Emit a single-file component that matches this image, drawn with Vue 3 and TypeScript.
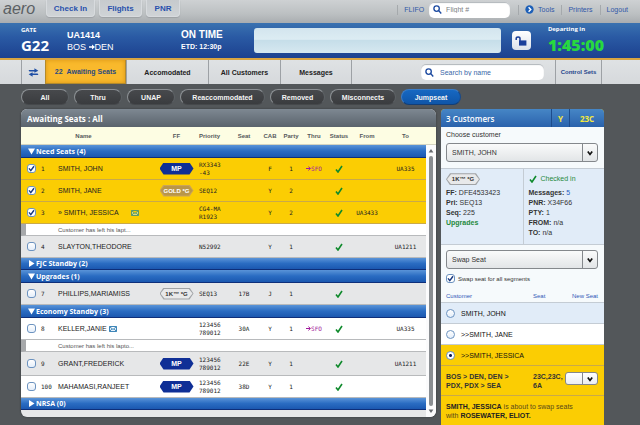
<script setup lang="ts">
import { ref } from 'vue'

interface Passenger {
  kind: 'pax'
  num: string
  name: string
  linked?: boolean
  mail?: boolean
  ff?: 'MP' | 'GOLD *G' | '1K™ *G'
  priority: string[]
  seat: string
  cab: string
  party: string
  thru?: string
  from?: string
  to?: string
  selected: boolean
  shade: 'white' | 'gray'
  tall?: boolean
}
interface Note { kind: 'note'; text: string }
interface Group { title: string; open: boolean; rows: (Passenger | Note)[] }

const groups = ref<Group[]>([
  {
    title: 'Need Seats (4)', open: true, rows: [
      { kind: 'pax', num: '1', name: 'SMITH, JOHN', ff: 'MP', priority: ['RX3343', '-43'], seat: '', cab: 'F', party: '1', thru: 'SFO', to: 'UA335', selected: true, shade: 'white' },
      { kind: 'pax', num: '2', name: 'SMITH, JANE', ff: 'GOLD *G', priority: ['SEQ12'], seat: '', cab: 'Y', party: '2', selected: true, shade: 'white' },
      { kind: 'pax', num: '3', name: 'SMITH, JESSICA', linked: true, mail: true, priority: ['CG4-MA', 'R1923'], seat: '', cab: 'Y', party: '2', from: 'UA3433', selected: true, shade: 'white' },
      { kind: 'note', text: 'Customer has left his lapt...' },
      { kind: 'pax', num: '4', name: 'SLAYTON,THEODORE', priority: ['N52992'], seat: '', cab: 'Y', party: '1', to: 'UA1211', selected: false, shade: 'gray' },
    ],
  },
  { title: 'FJC Standby (2)', open: false, rows: [] },
  {
    title: 'Upgrades (1)', open: true, rows: [
      { kind: 'pax', num: '7', name: 'PHILLIPS,MARIAMISS', ff: '1K™ *G', priority: ['SEQ13'], seat: '17B', cab: 'J', party: '1', selected: false, shade: 'gray' },
    ],
  },
  {
    title: 'Economy Standby (3)', open: true, rows: [
      { kind: 'pax', num: '8', name: 'KELLER,JANIE', mail: true, priority: ['123456', '789012'], seat: '30A', cab: 'Y', party: '1', thru: 'SFO', to: 'UA335', selected: false, shade: 'white' },
      { kind: 'note', text: 'Customer has left his lapto...' },
      { kind: 'pax', num: '9', name: 'GRANT,FREDERICK', ff: 'MP', priority: ['123456', '789012'], seat: '22E', cab: 'Y', party: '1', to: 'UA1211', selected: false, shade: 'gray', tall: true },
      { kind: 'pax', num: '100', name: 'MAHAMASI,RANJEET', ff: 'MP', priority: ['123456', '789012'], seat: '38D', cab: 'Y', party: '1', selected: false, shade: 'white' },
    ],
  },
  { title: 'NRSA (0)', open: false, rows: [] },
])

const filters = ['All', 'Thru', 'UNAP', 'Reaccommodated', 'Removed', 'Misconnects', 'Jumpseat']
const activeFilter = ref('Jumpseat')
const swapAll = ref(true)
const swapWith = ref('jessica')

const badgeClass = (ff: string) => (ff === 'MP' ? 'mp' : ff === 'GOLD *G' ? 'gold' : 'onek')
</script>

<template>
  <div class="page">
    <header class="topbar">
      <span class="logo">aero</span>
      <nav class="modes">
        <button class="mode mode-wide">Check In</button>
        <button class="mode mode-mid">Flights</button>
        <button class="mode mode-small">PNR</button>
      </nav>
      <nav class="links">
        <a href="#" class="flifo">FLIFO</a>
        <label class="search flight">
          <svg viewBox="0 0 10 10"><circle cx="4" cy="4" r="3" /><path d="M6.2 6.2 9.2 9.4" /></svg>
          <input type="text" placeholder="Flight #" aria-label="Flight number" />
        </label>
        <a href="#" class="tools">
          <svg viewBox="0 0 10 10"><circle cx="5" cy="5" r="4.6" /><path d="M4 2.6 6.4 5 4 7.4" /></svg>
          Tools
        </a>
        <a href="#" class="sep">Printers</a>
        <a href="#" class="sep">Logout</a>
      </nav>
    </header>

    <section class="flightbar">
      <div class="gate"><span class="gate-label">GATE</span><span class="gate-num">G22</span></div>
      <div class="flight-id">
        <strong>UA1414</strong>
        <span class="route">BOS
          <svg viewBox="0 0 6 6"><path d="M0 2.2H3V.6L6 3 3 5.4V3.8H0Z" /></svg>DEN</span>
      </div>
      <div class="status"><strong>ON TIME</strong><span>ETD: 12:30p</span></div>
      <div class="message"></div>
      <button class="lock" aria-label="Unlock">
        <svg viewBox="0 0 12 10"><path d="M4 4.4h7.4V9.6H4Z" /><path class="shackle" d="M1.2 4V2.4C1.2.4 5 .4 5 2.4V5" /></svg>
      </button>
      <div class="departing"><span>Departing in</span><strong>1:45:00</strong></div>
    </section>

    <nav class="tabs">
      <button class="tab swap" aria-label="Refresh">
        <svg viewBox="0 0 12 10"><path d="M1 2.2H7V.4L11.4 3 7 5.4V3.8H1.6L.6 3Z" /><path d="M11 7.8H5V9.6L.6 7 5 4.8V6.2h5.4L11.4 7Z" /></svg>
      </button>
      <button class="tab awaiting active"><span>22</span>Awaiting Seats</button>
      <button class="tab accom">Accomodated</button>
      <button class="tab all-tab">All Customers</button>
      <button class="tab msgs">Messages</button>
      <div class="find">
        <label class="search name">
          <svg viewBox="0 0 10 10"><circle cx="4" cy="4" r="3" /><path d="M6.2 6.2 9.2 9.4" /></svg>
          <input type="text" placeholder="Search by name" aria-label="Search by name" />
        </label>
      </div>
      <button class="tab sets">Control Sets</button>
    </nav>

    <div class="filters">
      <button v-for="f in filters" :key="f" class="pill" :class="['pill-' + f.toLowerCase(), { on: f === activeFilter }]" @click="activeFilter = f">{{ f }}</button>
    </div>

    <main class="content">
      <section class="list">
        <h1>Awaiting Seats : All</h1>
        <div class="list-body">
          <table>
            <colgroup>
              <col class="c-check" /><col class="c-num" /><col class="c-name" /><col class="c-ff" /><col class="c-pri" /><col class="c-seat" />
              <col class="c-cab" /><col class="c-party" /><col class="c-thru" /><col class="c-status" /><col class="c-from" /><col />
            </colgroup>
            <thead>
              <tr>
                <th></th><th></th><th class="h-name">Name</th><th>FF</th><th class="left">Priority</th><th>Seat</th>
                <th>CAB</th><th>Party</th><th>Thru</th><th>Status</th><th>From</th><th>To</th>
              </tr>
            </thead>
            <tbody v-for="g in groups" :key="g.title">
              <tr class="group" :class="{ closed: !g.open }">
                <td colspan="12">
                  <button @click="g.open = !g.open">
                    <svg viewBox="0 0 7 7"><path :d="g.open ? 'M0 .5H7L3.5 6.5Z' : 'M1 0 6.5 3.5 1 7Z'" /></svg>{{ g.title }}
                  </button>
                </td>
              </tr>
              <template v-if="g.open">
                <template v-for="(r, i) in g.rows" :key="i">
                  <tr v-if="r.kind === 'note'" class="note">
                    <td colspan="12"><span>{{ r.text }}</span></td>
                  </tr>
                  <tr v-else class="pax" :class="[r.selected ? 'picked' : r.shade, { tall: r.tall }]">
                    <td class="check"><input v-model="r.selected" type="checkbox" :aria-label="'Select ' + r.name" /></td>
                    <td class="num">{{ r.num }}</td>
                    <td class="who">
                      <span v-if="r.linked" class="linked">» </span>{{ r.name }}
                      <svg v-if="r.mail" class="mail" :class="{ far: r.linked }" viewBox="0 0 8 6"><path d="M.5.5h7v5h-7ZM.5.5 4 3.5 7.5.5M.5 5.5 3 2.8M7.5 5.5 5 2.8" /></svg>
                    </td>
                    <td class="ff"><span v-if="r.ff" class="badge" :class="badgeClass(r.ff)"><b>{{ r.ff }}</b></span></td>
                    <td class="left"><div v-for="p in r.priority" :key="p">{{ p }}</div></td>
                    <td>{{ r.seat }}</td>
                    <td>{{ r.cab }}</td>
                    <td>{{ r.party }}</td>
                    <td class="via">
                      <template v-if="r.thru"><svg viewBox="0 0 5 5"><path d="M0 2.5H4.2M2.4.6 4.4 2.5 2.4 4.4" /></svg>{{ r.thru }}</template>
                    </td>
                    <td><svg class="tick" viewBox="0 0 8 8"><path d="M1 4.4 3 7 7 1" /></svg></td>
                    <td>{{ r.from }}</td>
                    <td>{{ r.to }}</td>
                  </tr>
                </template>
              </template>
            </tbody>
          </table>
          <div class="scroll">
            <div class="scroll-cap"></div>
            <svg viewBox="0 0 6 5"><path d="M3 1 5.4 4.4H.6Z" /></svg>
            <div class="thumb"></div>
            <svg viewBox="0 0 6 5"><path d="M3 4 .6.6H5.4Z" /></svg>
          </div>
        </div>
      </section>

      <aside class="side">
        <header class="side-head">
          <h2>3 Customers</h2><span class="cabin">Y</span><span class="seatno">23C</span>
        </header>
        <div class="choose">
          <label for="customer">Choose customer</label>
          <div class="select">
            <select id="customer"><option>SMITH, JOHN</option><option>SMITH, JANE</option><option>SMITH, JESSICA</option></select>
            <span class="arrow"><svg viewBox="0 0 6 6"><path d="M.8 1.4 3 4.4 5.2 1.4" /></svg></span>
          </div>
        </div>
        <div class="details">
          <div>
            <p class="lead"><span class="badge onek"><b>1K™ *G</b></span></p>
            <p><b>FF:</b> DFE4533423</p>
            <p><b>Pri:</b> SEQ13</p>
            <p><b>Seq:</b> 225</p>
            <p><a href="#">Upgrades</a></p>
          </div>
          <div>
            <p class="lead ok"><svg class="tick" viewBox="0 0 8 8"><path d="M1 4.4 3 7 7 1" /></svg>Checked in</p>
            <p><b>Messages:</b> <i>5</i></p>
            <p><b>PNR:</b> X34F66</p>
            <p><b>PTY:</b> 1</p>
            <p><b>FROM:</b> n/a</p>
            <p><b>TO:</b> n/a</p>
          </div>
        </div>
        <div class="swapbox">
          <div class="select">
            <select aria-label="Action"><option>Swap Seat</option></select>
            <span class="arrow"><svg viewBox="0 0 6 6"><path d="M.8 1.4 3 4.4 5.2 1.4" /></svg></span>
          </div>
          <label class="segments"><input v-model="swapAll" type="checkbox" />Swap seat for all segments</label>
          <div class="swap-head"><span>Customer</span><span>Seat</span><span class="end">New Seat</span></div>
        </div>
        <label class="person blue"><input v-model="swapWith" type="radio" name="swap" value="john" />SMITH, JOHN</label>
        <label class="person"><input v-model="swapWith" type="radio" name="swap" value="jane" />&gt;&gt;SMITH, JANE</label>
        <label class="person gold-row"><input v-model="swapWith" type="radio" name="swap" value="jessica" />&gt;&gt;SMITH, JESSICA</label>
        <div class="legs">
          <span>BOS &gt; DEN, DEN &gt;<br />PDX, PDX &gt; SEA</span>
          <span>23C,23C,<br />6A</span>
          <div class="select mini">
            <select aria-label="New seat"><option></option></select>
            <span class="arrow"><svg viewBox="0 0 6 6"><path d="M.8 1.4 3 4.4 5.2 1.4" /></svg></span>
          </div>
        </div>
        <p class="summary"><b>SMITH, JESSICA</b> is about to swap seats<br />with <b>ROSEWATER, ELIOT.</b></p>
      </aside>
    </main>
  </div>
</template>

<style>
body {
  background: #53575a;
}
</style>

<style scoped>
* {
  box-sizing: border-box;
}
.page {
  display: flex;
  flex-direction: column;
  min-height: 100vh;
  font-family: "Liberation Sans", Arial, sans-serif;
  font-size: 7px;
  color: #222;
}
button, input, select {
  font: inherit;
  color: inherit;
  margin: 0;
  padding: 0;
  border: 0;
  background: none;
}
a {
  color: #3058a8;
  text-decoration: none;
}
p, h1, h2 {
  margin: 0;
}
svg {
  flex: none;
}

/* top bar */
.topbar {
  display: flex;
  height: 23px;
  padding: 0 12px 0 3px;
  background: linear-gradient(#ced1d3, #bcc0c2 60%, #a9adb0);
}
.logo {
  width: 43px;
  font-size: 16px;
  font-style: italic;
  line-height: 18px;
  color: #5b5f63;
}
.modes {
  display: flex;
  gap: 4px;
}
.mode {
  height: 17px;
  border: 1px solid #d8dbde;
  border-top: 0;
  border-radius: 0 0 4px 4px;
  background: linear-gradient(#c6cacd, #cfd3d6);
  font-size: 8px;
  font-weight: bold;
  color: #2850ac;
  box-shadow: 0 1px 1px #9da1a5;
}
.mode-wide { width: 49px; }
.mode-mid { width: 43px; }
.mode-small { width: 34px; }
.links {
  display: flex;
  align-items: center;
  height: 19px;
  margin-left: auto;
}
.links a {
  display: flex;
  align-items: center;
  height: 10px;
  padding-left: 6px;
}
.links .sep {
  margin-left: 7px;
  border-left: 1px solid #a5a9ac;
}
.links .flifo, .links .tools {
  border-left: 1px solid #a5a9ac;
}
.tools svg {
  width: 9px;
  height: 9px;
  margin-right: 4px;
  fill: #1c5fb8;
}
.tools path {
  fill: none;
  stroke: #fff;
  stroke-width: 1.6;
}
.search {
  display: flex;
  align-items: center;
  gap: 4px;
  height: 16px;
  padding: 0 4px;
  border-radius: 5px;
  background: #fff;
  box-shadow: inset 0 1px 1px #b0b5ba;
}
.search svg {
  width: 9px;
  height: 9px;
  fill: none;
  stroke: #1c4aa0;
  stroke-width: 1.5;
}
.search input {
  flex: 1;
  min-width: 0;
  outline: 0;
}
.search input::placeholder {
  color: #7c8084;
  opacity: 1;
}
.search.name input::placeholder {
  color: #3a68a8;
}
.flight {
  width: 81px;
  margin: 0 8px 0 5px;
}

/* flight bar */
.flightbar {
  display: flex;
  align-items: center;
  height: 37px;
  padding: 0 36px 0 21px;
  border-bottom: 2px solid #d9a441;
  background: linear-gradient(#3a72b0, #2a5aa4 40%, #1c418f);
  color: #fff;
}
.gate {
  display: flex;
  flex-direction: column;
  width: 46px;
  font-family: "Open Sans", sans-serif;
  font-weight: bold;
}
.gate-label {
  font-size: 6px;
  line-height: 9px;
}
.gate-num {
  font-size: 15px;
  line-height: 21px;
}
.flight-id, .status {
  display: flex;
  flex-direction: column;
}
.flight-id {
  width: 114px;
  font-size: 9px;
  line-height: 12px;
}
.route svg {
  width: 6px;
  height: 6px;
  fill: #fff;
}
.status {
  width: 73px;
  font-size: 7px;
  font-weight: bold;
  line-height: 12px;
}
.status strong {
  font-size: 10px;
}
.message {
  flex: 1;
  height: 25px;
  border-radius: 3px;
  background: linear-gradient(#d3e5ee, #dcecf3 45%, #c6dee9 50%, #d6e8f0);
}
.lock {
  display: grid;
  place-items: center;
  width: 19px;
  height: 19px;
  margin: 0 17px 0 11px;
  border-radius: 4px;
  background: linear-gradient(#fff, #dde2ea);
}
.lock svg {
  width: 12px;
  height: 10px;
  fill: #1b3f9a;
}
.lock .shackle {
  fill: none;
  stroke: #1b3f9a;
  stroke-width: 1.5;
}
.departing {
  display: flex;
  flex-direction: column;
  font: bold 6px/9px "Open Sans", sans-serif;
}
.departing strong {
  font-size: 16px;
  line-height: 22px;
  color: #27d93f;
}

/* tabs */
.tabs {
  display: flex;
  height: 24px;
  padding: 0 38px 0 21px;
  background: linear-gradient(#dfe2e4, #d6d9dc);
  color: #222;
}
.tab {
  border-left: 1px solid #9da1a5;
  font-weight: bold;
  text-align: center;
}
.swap {
  width: 24px;
}
.swap svg {
  width: 11px;
  height: 9px;
  fill: #1f4fa5;
  vertical-align: middle;
}
.awaiting {
  width: 81px;
}
.awaiting span {
  margin-right: 4px;
}
.active {
  border: 1px solid #b38a2c;
  border-top: 0;
  background: #f9b92c;
  box-shadow: inset 0 0 4px #d99414;
  color: #2a4a80;
}
.accom { width: 82px; }
.all-tab { width: 72px; }
.msgs { width: 71px; }
.find {
  flex: 1;
  display: flex;
  align-items: center;
  justify-content: flex-end;
  padding-right: 11px;
  border-left: 1px solid #9da1a5;
}
.search.name {
  width: 123px;
  gap: 6px;
}
.sets {
  width: 47px;
  border-right: 1px solid #9da1a5;
  font-size: 6px;
  color: #24458c;
}

/* filters */
.filters {
  display: flex;
  gap: 5px;
  padding: 5px 21px 4px;
}
.pill {
  height: 16px;
  width: 48px;
  border: 1px solid #777b7f;
  border-color: #8c9094 #5c6064 #45484b #8c9094;
  border-radius: 8px;
  background: linear-gradient(#47494c, #3a3c3f);
  font-weight: bold;
  color: #f4f4f4;
}
.pill-reaccommodated { width: 85px; }
.pill-removed { width: 55px; }
.pill-misconnects { width: 66px; }
.pill-jumpseat { width: 60px; }
.pill.on {
  border-color: #3a7cc8 #174a8c #123e78 #3a7cc8;
  background: linear-gradient(#1768c2, #0f55a8);
}

/* main list */
.content {
  flex: 1;
  display: flex;
  align-items: stretch;
  gap: 5px;
  padding: 0 36px 0 21px;
}
.list {
  flex: 1;
  align-self: flex-start;
  min-width: 0;
  margin-bottom: 8px;
  border-radius: 6px;
  overflow: hidden;
  background: #e6e7e8;
  box-shadow: 0 0 2px #2f3235;
}
h1 {
  height: 18px;
  padding-left: 6px;
  background: linear-gradient(#7e8892, #5a636c);
  font: bold 8px/19px "Open Sans", sans-serif;
  color: #fff;
}
.list-body {
  display: flex;
}
table {
  flex: 1;
  align-self: flex-start;
  min-width: 0;
  table-layout: fixed;
  border-spacing: 0;
  font-family: "DejaVu Sans Mono", monospace;
  font-size: 6px;
  line-height: 8px;
}
.c-check { width: 17px; }
.c-num { width: 20px; }
.c-name { width: 97px; }
.c-ff { width: 43px; }
.c-pri { width: 33px; }
.c-seat { width: 26px; }
.c-cab { width: 26px; }
.c-party { width: 16px; }
.c-thru { width: 30px; }
.c-status { width: 20px; }
.c-from { width: 36px; }
td, th {
  padding: 0;
  text-align: center;
  white-space: nowrap;
}
th {
  height: 18px;
  background: #fdfde3;
  border-bottom: 1px solid #d4d4c0;
  font: bold 6px/8px "Liberation Sans", Arial, sans-serif;
  color: #55595c;
}
.h-name {
  padding-right: 46px;
}
.left {
  padding-left: 1px;
  text-align: left;
}
.group td {
  height: 13px;
  background: linear-gradient(#5a94d8, #2a6cc2 50%, #1b58b0);
  border-bottom: 1px solid #0e2f7a;
  text-align: left;
}
.group.closed td {
  height: 12px;
}
.group button {
  display: flex;
  align-items: center;
  gap: 1px;
  padding-left: 7px;
  font: bold 7px/11px "Open Sans", sans-serif;
  color: #fff;
}
.group svg {
  width: 7px;
  height: 7px;
  fill: #fff;
}
.pax td {
  height: 22px;
  border-bottom: 1px solid #b8babc;
}
.pax.tall td {
  height: 24px;
}
.picked td {
  background: #fbcd03;
  border-color: #c9a94a;
}
.white td {
  background: #fff;
}
.gray td {
  background: #e6e7e8;
}
.note td {
  height: 12px;
  padding: 0;
  border-bottom: 1px solid #b8babc;
  border-left: 5px solid #a6a8aa;
  background: #fff;
  text-align: left;
}
.note span {
  padding-left: 32px;
  font-family: "Liberation Sans", Arial, sans-serif;
  color: #555;
}
.pax td.num, .pax td.who {
  text-align: left;
}
.num {
  padding-left: 3px;
}
.pax td.who {
  font-family: "Liberation Sans", Arial, sans-serif;
  font-size: 7px;
}
.mail {
  width: 8px;
  height: 6px;
  vertical-align: middle;
  fill: #e8f2fb;
  stroke: #3f86b8;
  stroke-width: 1;
}
.mail.far {
  margin-left: 11px;
  fill: #d9d98a;
  stroke: #5c9a6a;
}
input[type="checkbox"], input[type="radio"] {
  appearance: none;
  display: block;
  flex: none;
  width: 9px;
  height: 9px;
  border: 1px solid #6c93c0;
  border-radius: 3px;
  background: linear-gradient(#fff, #e4eefa);
}
input[type="checkbox"]:checked {
  background: #fff url("data:image/svg+xml,%3Csvg xmlns='http://www.w3.org/2000/svg' viewBox='0 0 7 7'%3E%3Cpath d='M1 3.4 2.8 5.6 6 1.2' fill='none' stroke='%231a3a80' stroke-width='1.5'/%3E%3C/svg%3E");
}
.check input[type="checkbox"] {
  margin-left: 6px;
}
input[type="radio"] {
  border-radius: 50%;
}
input[type="radio"]:checked {
  background: radial-gradient(circle, #111c50 0 1px, #fff 2px);
}
.badge {
  display: inline-block;
  padding: 1px;
  height: 12px;
  width: 34px;
  vertical-align: middle;
  clip-path: polygon(0 50%, 4px 0, calc(100% - 4px) 0, 100% 50%, calc(100% - 4px) 100%, 4px 100%);
  font: bold 6px/10px "Liberation Sans", Arial, sans-serif;
  text-align: center;
  color: #fff;
}
.badge b {
  display: block;
  clip-path: polygon(0 50%, 4px 0, calc(100% - 4px) 0, 100% 50%, calc(100% - 4px) 100%, 4px 100%);
}
.mp {
  font-size: 7px;
}
.mp, .mp b {
  background: #0f2f96;
}
.gold {
  background: #c9a35a;
}
.gold b {
  background: #b99648;
}
.onek {
  background: #a0a3a6;
  font-weight: normal;
  color: #333;
}
.onek b {
  background: #e8e9ea;
}
.via {
  color: #a01a9c;
}
.via svg {
  width: 5px;
  height: 5px;
  fill: none;
  stroke: #a01a9c;
}
.tick {
  width: 8px;
  height: 8px;
  vertical-align: middle;
  fill: none;
  stroke: #0f8a2c;
  stroke-width: 1.6;
}
.scroll {
  display: flex;
  flex-direction: column;
  align-items: center;
  width: 10px;
  height: 290px;
  background: #fbfbfc;
}
.scroll-cap {
  width: 100%;
  height: 18px;
  background: #fdfde3;
  border-bottom: 1px solid #d4d4c0;
}
.scroll svg {
  width: 6px;
  height: 5px;
  margin: 3px 0;
  fill: #666a6e;
}
.thumb {
  flex: 1;
  width: 4px;
  border-radius: 2px;
  background: #8a8e92;
}

/* side panel */
.side {
  display: flex;
  flex-direction: column;
  width: 163px;
  border-radius: 4px 4px 0 0;
  overflow: hidden;
  background: #fbcd03;
  color: #333;
}
.side-head {
  display: flex;
  height: 18px;
  background: linear-gradient(#4686c6, #2a62ac);
  font: bold 8px/19px "Open Sans", sans-serif;
  color: #f4ea3c;
}
h2 {
  flex: 1;
  padding-left: 5px;
  font: 600 8px/19px "Open Sans", sans-serif;
  color: #fff;
}
.cabin, .seatno {
  border-left: 1px solid #1d4c8c;
  text-align: center;
}
.cabin { width: 18px; }
.seatno { width: 35px; }
.choose {
  display: flex;
  flex-direction: column;
  gap: 4px;
  padding: 4px 6px 6px 5px;
  border-bottom: 1px solid #c4ccd4;
  background: #f6fafc;
  line-height: 8px;
}
.select {
  display: grid;
  height: 19px;
  border: 1px solid #84888c;
  border-radius: 3px;
  background: linear-gradient(#fafbfb, #e2e5e7);
}
.select > * {
  grid-area: 1 / 1;
}
.select select {
  width: 100%;
  appearance: none;
  outline: 0;
  padding-left: 5px;
}
.arrow {
  justify-self: end;
  display: grid;
  place-items: center;
  width: 15px;
  border-left: 1px solid #84888c;
  pointer-events: none;
}
.arrow svg {
  width: 6px;
  height: 6px;
  fill: none;
  stroke: #111;
  stroke-width: 1.7;
}
.details {
  display: grid;
  grid-template-columns: 1fr 1fr;
  height: 76px;
  border-bottom: 1px solid #c4ccd4;
  background: #e1ecf8;
  line-height: 10px;
}
.details > div {
  padding: 4px 0 0 5px;
}
.details > div + div {
  border-left: 1px solid #c4ccd4;
}
.details .lead {
  height: 15px;
  line-height: 12px;
}
.details a {
  font-weight: bold;
  color: #1f8a3c;
}
.details i {
  font-style: normal;
  color: #2a62c0;
}
.details .ok {
  color: #1f8a3c;
}
.ok svg {
  margin-right: 4px;
}
.swapbox {
  display: flex;
  flex-direction: column;
  padding: 5px 6px 0 5px;
  height: 58px;
  background: #f6fafc;
  border-bottom: 1px solid #c4ccd4;
}
.segments {
  display: flex;
  align-items: center;
  gap: 3px;
  height: 19px;
  font-size: 6px;
}
.swap-head {
  display: grid;
  grid-template-columns: 87px 30px 1fr;
  padding-top: 4px;
  font-size: 6px;
  line-height: 8px;
  color: #3058b8;
}
.end {
  text-align: right;
}
.person {
  display: flex;
  align-items: center;
  gap: 6px;
  height: 21px;
  padding-left: 5px;
  border-bottom: 1px solid #c4ccd4;
  background: #fff;
  color: #111;
}
.blue {
  background: #e1ecf8;
}
.gold-row {
  background: #fbcd03;
  border-color: #c9a94a;
}
.legs {
  display: grid;
  grid-template-columns: 87px 1fr 33px;
  padding: 6px 6px 5px 5px;
  border-bottom: 1px solid #c9a94a;
  font-weight: bold;
  line-height: 9px;
}
.mini {
  height: 13px;
  background: linear-gradient(#fff, #eceef0);
}
.summary {
  padding: 6px 0 4px 5px;
  line-height: 9px;
  color: #5a4a1a;
}
.summary b {
  color: #222;
}
</style>
